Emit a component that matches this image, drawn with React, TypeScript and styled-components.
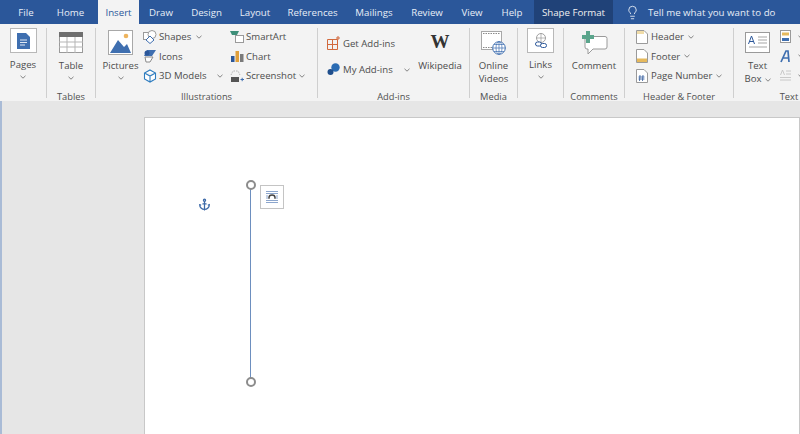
import React from 'react';
import styled, { createGlobalStyle } from 'styled-components';
import { Anchor, Lightbulb } from 'lucide-react';

const Global = createGlobalStyle`
  html, body {
    margin: 0;
    padding: 0;
    overflow: hidden;
    background: #e6e6e6;
  }
`;

const Window = styled.div`
  width: 800px;
  height: 434px;
  overflow: hidden;
  display: flex;
  flex-direction: column;
  font-family: 'Open Sans', 'Noto Sans', sans-serif;
  color: #4d4d4d;
`;

const TabBar = styled.div`
  height: 24px;
  flex: none;
  background: #2b579a;
  display: flex;
  align-items: stretch;
  padding-left: 9px;
  font-size: 9.7px;
`;

const Tab = styled.div<{ $active?: boolean; $w: number }>`
  width: ${(p) => p.$w}px;
  flex: none;
  display: flex;
  align-items: center;
  justify-content: center;
  white-space: nowrap;
  color: ${(p) => (p.$active ? '#2b579a' : '#e8eef7')};
  background: ${(p) => (p.$active ? '#f3f3f3' : 'transparent')};
`;

const ShapeTab = styled(Tab)`
  margin-left: 3px;
  background: #204278;
  color: #f0f0f0;
`;

const TellMe = styled.div`
  display: flex;
  align-items: center;
  gap: 8px;
  padding-left: 12px;
  color: #e8eef7;
  white-space: nowrap;
`;

const Ribbon = styled.div`
  height: 77px;
  flex: none;
  display: flex;
  background: #f3f3f3;
  font-size: 9.6px;
`;

const Group = styled.div<{ $w: number }>`
  width: ${(p) => p.$w}px;
  flex: none;
  display: flex;
  flex-direction: column;
`;

const GroupBody = styled.div<{ $pl?: number }>`
  height: 66px;
  flex: none;
  display: flex;
  justify-content: ${(p) => (p.$pl === undefined ? 'center' : 'flex-start')};
  padding-left: ${(p) => p.$pl ?? 0}px;
  padding-top: 4px;
  box-sizing: border-box;
`;

const GroupLabel = styled.div`
  height: 11px;
  line-height: 14px;
  text-align: center;
  font-size: 9.3px;
  color: #505050;
  white-space: nowrap;
`;

const Separator = styled.div`
  width: 1px;
  flex: none;
  margin: 4px 0 3px;
  background: #cfcfcf;
`;

const BigButton = styled.div<{ $w?: number }>`
  width: ${(p) => p.$w ?? 44}px;
  flex: none;
  display: flex;
  flex-direction: column;
  align-items: center;
  text-align: center;
  line-height: 13px;
`;

const IconSlot = styled.div`
  height: 31px;
  padding-bottom: 2px;
  box-sizing: border-box;
  display: flex;
  align-items: center;
  justify-content: center;
`;

const FramedIcon = styled.div`
  width: 27px;
  height: 25px;
  box-sizing: border-box;
  border: 1px solid #b8b8b8;
  background: #fff;
  display: flex;
  align-items: center;
  justify-content: center;
  margin-bottom: 5px;
`;

const SmallColumn = styled.div<{ $w?: number; $mt?: number; $ml?: number }>`
  width: ${(p) => (p.$w ? `${p.$w}px` : 'auto')};
  margin-top: ${(p) => p.$mt ?? 0}px;
  margin-left: ${(p) => p.$ml ?? 0}px;
  display: flex;
  flex: none;
  flex-direction: column;
`;

const SmallRow = styled.div<{ $h?: number; $gap?: number }>`
  height: ${(p) => p.$h ?? 19.5}px;
  display: flex;
  align-items: center;
  gap: ${(p) => p.$gap ?? 2}px;
  white-space: nowrap;
`;

const ArrowSvg = styled.svg<{ $ml?: number }>`
  margin-left: ${(p) => p.$ml ?? 3}px;
  width: 6px;
  height: 4px;
  flex: none;
`;

const ArrowWrap = styled.div`
  height: 12px;
  display: flex;
  align-items: center;
`;

const Arrow = ({ ml }: { ml?: number }) => (
  <ArrowSvg $ml={ml} viewBox="0 0 6 4">
    <path d="M0.5 0.8 L3 3.2 L5.5 0.8" fill="none" stroke="#666" strokeWidth="0.8" />
  </ArrowSvg>
);

const Workspace = styled.div`
  flex: 1;
  display: flex;
  background: #e6e6e6;
  border-left: 2px solid #a9bbd6;
  padding: 16px 0 0 142px;
  min-height: 0;
`;

const Page = styled.div`
  position: relative;
  flex: 1;
  height: 340px;
  background: #fff;
  border: 1px solid #c8c8c8;
  box-sizing: border-box;
`;

const AnchorMark = styled.div`
  position: absolute;
  left: 53px;
  top: 80px;
  color: #3d6aa8;
  display: flex;
`;

const ShapeLine = styled.div`
  position: absolute;
  left: 105px;
  top: 67px;
  width: 1px;
  height: 197px;
  background: #6d8fbf;
`;

const Handle = styled.div<{ $top: number }>`
  position: absolute;
  left: 101px;
  top: ${(p) => p.$top}px;
  width: 10px;
  height: 10px;
  box-sizing: border-box;
  border: 2px solid #8c8c8c;
  border-radius: 50%;
  background: #fff;
`;

const LayoutButton = styled.div`
  position: absolute;
  left: 115px;
  top: 67px;
  width: 24px;
  height: 24px;
  box-sizing: border-box;
  border: 1px solid #c4c4c4;
  background: #fff;
  display: flex;
  align-items: center;
  justify-content: center;
`;

const PagesIcon = () => (
  <svg width="13" height="16" viewBox="0 0 13 16">
    <path d="M0 0 H9 L13 4 V16 H0 Z" fill="#3f6fb0" />
    <path d="M3 7 H10 M3 9.5 H10 M3 12 H8" stroke="#dfe8f4" strokeWidth="1" />
  </svg>
);

const TableIcon = () => (
  <svg width="24" height="21" viewBox="0 0 24 21">
    <rect x="0.5" y="0.5" width="23" height="20" fill="#fff" stroke="#9a9a9a" />
    <rect x="0" y="0" width="24" height="5" fill="#6f6f6f" />
    <path d="M0 10 H24 M0 15 H24 M8 5 V21 M16 5 V21" stroke="#b5b5b5" strokeWidth="1" />
  </svg>
);

const PicturesIcon = () => (
  <svg width="25" height="25" viewBox="0 0 25 25">
    <rect x="0.5" y="0.5" width="24" height="24" fill="#fff" stroke="#a8a8a8" />
    <circle cx="18" cy="6" r="2.3" fill="#eeb45e" />
    <path d="M2 23 L10 10 L16 17 L19 14 L23 23 Z" fill="#3f6fb0" />
  </svg>
);

const ShapesIcon = () => (
  <svg width="14" height="14" viewBox="0 0 14 14">
    <rect x="0.5" y="2.5" width="7" height="7" fill="#fff" stroke="#9a9a9a" />
    <circle cx="9" cy="4.5" r="4" fill="#fff" stroke="#9a9a9a" />
    <path d="M7 6 L11 10 L7 13.5 L3 10 Z" fill="#fff" stroke="#3f6fb0" />
  </svg>
);

const IconsIcon = () => (
  <svg width="14" height="14" viewBox="0 0 14 14">
    <path d="M4 1 L13 1 L9 7 L1 7 Z" fill="#3f6fb0" />
    <circle cx="4" cy="4" r="2.5" fill="#2b579a" />
    <path d="M2 8 H10 L7 13 H3 Z" fill="#fff" stroke="#8a8a8a" />
  </svg>
);

const ModelsIcon = () => (
  <svg width="14" height="14" viewBox="0 0 14 14">
    <path d="M7 1 L12.5 4 V10 L7 13 L1.5 10 V4 Z M1.5 4 L7 7 L12.5 4 M7 7 V13" fill="#fff" stroke="#2e7cbf" strokeWidth="1.1" />
  </svg>
);

const SmartArtIcon = () => (
  <svg width="14" height="14" viewBox="0 0 14 14">
    <path d="M0 1 H9 L7 5 H2 Z" fill="#3e8f79" />
    <rect x="5.5" y="5.5" width="8" height="7" fill="#fff" stroke="#9a9a9a" />
  </svg>
);

const ChartIcon = () => (
  <svg width="14" height="14" viewBox="0 0 14 14">
    <rect x="1" y="7" width="3.5" height="6" fill="#2b579a" />
    <rect x="5.5" y="2" width="3.5" height="11" fill="#e0a03c" />
    <rect x="10" y="5" width="3.5" height="8" fill="#7a7a7a" />
  </svg>
);

const ScreenshotIcon = () => (
  <svg width="14" height="14" viewBox="0 0 14 14">
    <path d="M1 6 L3 2 H8 L10 6" fill="none" stroke="#b5b5b5" strokeDasharray="1.5 1" />
    <rect x="1" y="8" width="8" height="5" fill="#555" />
    <path d="M10.5 10.5 H14 M12.2 8.8 V12.2" stroke="#3f6fb0" strokeWidth="1" />
  </svg>
);

const GetAddInsIcon = () => (
  <svg width="13" height="14" viewBox="0 0 13 14">
    <path d="M0.5 3.5 H10.5 V13.5 H0.5 Z M5.5 3.5 V13.5 M0.5 8.5 H10.5" fill="none" stroke="#d2693c" />
    <path d="M11 0 V4 M9 2 H13" stroke="#d2693c" />
  </svg>
);

const MyAddInsIcon = () => (
  <svg width="13" height="13" viewBox="0 0 13 13">
    <circle cx="8.5" cy="4.5" r="4.2" fill="#2b6cb3" />
    <circle cx="3.5" cy="9" r="3" fill="#1f4e8c" />
  </svg>
);

const VideoIcon = () => (
  <svg width="25" height="24" viewBox="0 0 25 24">
    <rect x="0.5" y="0.5" width="20" height="18" fill="#fff" stroke="#a8a8a8" />
    <path d="M2 2.5 H19 M2 16.5 H19" stroke="#8a8a8a" strokeDasharray="1.5 1" />
    <circle cx="18" cy="17" r="6.3" fill="#fff" stroke="#3f6fb0" />
    <path d="M11.7 17 H24.3 M18 10.7 V23.3 M13 13.5 H23 M13 20.5 H23" stroke="#3f6fb0" strokeWidth="0.7" />
    <ellipse cx="18" cy="17" rx="3" ry="6.3" fill="none" stroke="#3f6fb0" strokeWidth="0.7" />
  </svg>
);

const LinksIcon = () => (
  <svg width="14" height="16" viewBox="0 0 14 16">
    <circle cx="7" cy="5" r="4.5" fill="none" stroke="#8a8a8a" strokeWidth="0.8" />
    <path d="M2.5 5 H11.5 M7 0.5 V9.5" stroke="#8a8a8a" strokeWidth="0.6" />
    <rect x="1.5" y="9" width="6" height="4" rx="2" fill="#fff" stroke="#2b579a" />
    <rect x="6.5" y="10.5" width="6" height="4" rx="2" fill="#fff" stroke="#2b579a" />
  </svg>
);

const CommentIcon = () => (
  <svg width="27" height="24" viewBox="0 0 27 24">
    <path d="M4 5.5 H24 Q26 5.5 26 7.5 V16 Q26 18 24 18 H12 L7 23 V18 H6 Q4 18 4 16 Z" fill="#fff" stroke="#9a9a9a" />
    <path d="M5 0 H9 V4 H13 V8 H9 V12 H5 V8 H1 V4 H5 Z" fill="#5ba58c" />
  </svg>
);

const HeaderIcon = ({ band }: { band: 'top' | 'bottom' }) => (
  <svg width="12" height="14" viewBox="0 0 12 14">
    <path d="M0.5 0.5 H8 L11.5 4 V13.5 H0.5 Z" fill="#fff" stroke="#9a9a9a" />
    {band === 'top' ? (
      <rect x="1" y="1" width="7" height="3" fill="#f0dca8" />
    ) : (
      <rect x="1" y="9.5" width="10" height="3.5" fill="#e6b95c" />
    )}
  </svg>
);

const PageNumberIcon = () => (
  <svg width="12" height="14" viewBox="0 0 12 14">
    <path d="M0.5 0.5 H8 L11.5 4 V13.5 H0.5 Z" fill="#fff" stroke="#9a9a9a" />
    <path d="M4 6 L3.5 12 M7 6 L6.5 12 M2.5 8 H8.5 M2.5 10 H8.5" stroke="#2b579a" strokeWidth="0.8" />
  </svg>
);

const TextBoxIcon = () => (
  <svg width="25" height="21" viewBox="0 0 25 21">
    <rect x="0.5" y="0.5" width="24" height="20" fill="#fff" stroke="#9a9a9a" />
    <path d="M13 5 H22 M13 8 H22 M13 11 H22 M4 15 H22" stroke="#a5a5a5" strokeWidth="1" />
    <path d="M3.5 12 L6.5 4 L9.5 12 M4.7 9.5 H8.3" fill="none" stroke="#2b579a" strokeWidth="1" />
  </svg>
);

const QuickPartsIcon = () => (
  <svg width="11" height="13" viewBox="0 0 11 13">
    <rect x="0.5" y="0.5" width="10" height="12" fill="#fff" stroke="#9a9a9a" />
    <rect x="2" y="2.5" width="7" height="3" fill="#e6b95c" />
    <rect x="2" y="8" width="7" height="3" fill="#3f6fb0" />
  </svg>
);

const WordArtIcon = () => (
  <svg width="11" height="13" viewBox="0 0 11 13">
    <path d="M1 12 L6 1 H8 L9 12 M3 8 H9" fill="none" stroke="#3f6fb0" strokeWidth="1.7" />
  </svg>
);

const DropCapIcon = () => (
  <svg width="11" height="13" viewBox="0 0 11 13">
    <path d="M0.5 6 L2.5 1 L4.5 6 M6 2 H11 M6 5 H11 M0 8.5 H11 M0 11 H11" fill="none" stroke="#c4c4c4" strokeWidth="0.9" />
  </svg>
);

const WrapIcon = () => (
  <svg width="14" height="14" viewBox="0 0 14 14">
    <path d="M1 1.5 H13 M1 3.5 H13 M1 6 H3 M11 6 H13 M1 8 H3 M11 8 H13 M1 10.5 H13 M1 12.5 H13" stroke="#7f9cc7" strokeWidth="0.9" />
    <path d="M4 8.8 V7.5 A3 2.6 0 0 1 10 7.5 V8.8" fill="none" stroke="#444" strokeWidth="1.5" />
  </svg>
);

const WikiMark = styled(IconSlot)`
  font-family: 'Liberation Serif', serif;
  font-size: 19px;
  font-weight: 700;
  color: #333;
  padding-bottom: 4px;
`;

const tabs: [string, number][] = [
  ['File', 34],
  ['Home', 55],
];
const tabsAfter: [string, number][] = [
  ['Draw', 44],
  ['Design', 47],
  ['Layout', 50],
  ['References', 65],
  ['Mailings', 58],
  ['Review', 48],
  ['View', 42],
  ['Help', 38],
];

export default function App() {
  return (
    <Window>
      <Global />
      <TabBar>
        {tabs.map(([t, w]) => (
          <Tab key={t} $w={w}>{t}</Tab>
        ))}
        <Tab $active $w={41}>Insert</Tab>
        {tabsAfter.map(([t, w]) => (
          <Tab key={t} $w={w}>{t}</Tab>
        ))}
        <ShapeTab $w={79}>Shape Format</ShapeTab>
        <TellMe>
          <Lightbulb size={15} strokeWidth={1.4} />
          Tell me what you want to do
        </TellMe>
      </TabBar>

      <Ribbon>
        <Group $w={46}>
          <GroupBody>
            <BigButton>
              <FramedIcon><PagesIcon /></FramedIcon>
              Pages
              <ArrowWrap><Arrow ml={0} /></ArrowWrap>
            </BigButton>
          </GroupBody>
          <GroupLabel />
        </Group>
        <Separator />
        <Group $w={48}>
          <GroupBody>
            <BigButton>
              <IconSlot><TableIcon /></IconSlot>
              Table
              <ArrowWrap><Arrow ml={0} /></ArrowWrap>
            </BigButton>
          </GroupBody>
          <GroupLabel>Tables</GroupLabel>
        </Group>
        <Separator />
        <Group $w={221}>
          <GroupBody $pl={4}>
            <BigButton $w={41}>
              <IconSlot><PicturesIcon /></IconSlot>
              Pictures
              <ArrowWrap><Arrow ml={0} /></ArrowWrap>
            </BigButton>
            <SmallColumn $w={87} $mt={-1} $ml={2}>
              <SmallRow><ShapesIcon />Shapes<Arrow ml={3} /></SmallRow>
              <SmallRow><IconsIcon />Icons</SmallRow>
              <SmallRow><ModelsIcon />3D Models<Arrow ml={8} /></SmallRow>
            </SmallColumn>
            <SmallColumn $mt={-1}>
              <SmallRow><SmartArtIcon />SmartArt</SmallRow>
              <SmallRow><ChartIcon />Chart</SmallRow>
              <SmallRow><ScreenshotIcon />Screenshot<Arrow ml={1} /></SmallRow>
            </SmallColumn>
          </GroupBody>
          <GroupLabel>Illustrations</GroupLabel>
        </Group>
        <Separator />
        <Group $w={151}>
          <GroupBody $pl={9}>
            <SmallColumn $w={88}>
              <SmallRow $h={30} $gap={3}>
                <GetAddInsIcon />Get Add-ins
              </SmallRow>
              <SmallRow $h={23} $gap={3}>
                <MyAddInsIcon />My Add-ins<Arrow ml={8} />
              </SmallRow>
            </SmallColumn>
            <BigButton $w={50}>
              <WikiMark>W</WikiMark>
              Wikipedia
            </BigButton>
          </GroupBody>
          <GroupLabel>Add-ins</GroupLabel>
        </Group>
        <Separator />
        <Group $w={47}>
          <GroupBody>
            <BigButton>
              <IconSlot><VideoIcon /></IconSlot>
              Online<br />Videos
            </BigButton>
          </GroupBody>
          <GroupLabel>Media</GroupLabel>
        </Group>
        <Separator />
        <Group $w={45}>
          <GroupBody>
            <BigButton>
              <FramedIcon><LinksIcon /></FramedIcon>
              Links
              <ArrowWrap><Arrow ml={0} /></ArrowWrap>
            </BigButton>
          </GroupBody>
          <GroupLabel />
        </Group>
        <Separator />
        <Group $w={60}>
          <GroupBody>
            <BigButton $w={50}>
              <IconSlot><CommentIcon /></IconSlot>
              Comment
            </BigButton>
          </GroupBody>
          <GroupLabel>Comments</GroupLabel>
        </Group>
        <Separator />
        <Group $w={108}>
          <GroupBody $pl={11}>
            <SmallColumn $mt={-1}>
              <SmallRow $gap={3}><HeaderIcon band="top" />Header<Arrow ml={1} /></SmallRow>
              <SmallRow $gap={3}><HeaderIcon band="bottom" />Footer<Arrow ml={1} /></SmallRow>
              <SmallRow $gap={3}><PageNumberIcon />Page Number<Arrow ml={1} /></SmallRow>
            </SmallColumn>
          </GroupBody>
          <GroupLabel>Header &amp; Footer</GroupLabel>
        </Group>
        <Separator />
        <Group $w={110}>
          <GroupBody $pl={1}>
            <BigButton $w={45}>
              <IconSlot><TextBoxIcon /></IconSlot>
              Text<br />
              <span>Box<Arrow ml={3} /></span>
            </BigButton>
            <SmallColumn $mt={-1}>
              <SmallRow><QuickPartsIcon /><Arrow ml={5} /></SmallRow>
              <SmallRow><WordArtIcon /><Arrow ml={5} /></SmallRow>
              <SmallRow><DropCapIcon /><Arrow ml={5} /></SmallRow>
            </SmallColumn>
          </GroupBody>
          <GroupLabel>Text</GroupLabel>
        </Group>
      </Ribbon>

      <Workspace>
        <Page>
          <AnchorMark><Anchor size={13} strokeWidth={2.3} /></AnchorMark>
          <ShapeLine />
          <Handle $top={62} />
          <Handle $top={259} />
          <LayoutButton><WrapIcon /></LayoutButton>
        </Page>
      </Workspace>
    </Window>
  );
}
